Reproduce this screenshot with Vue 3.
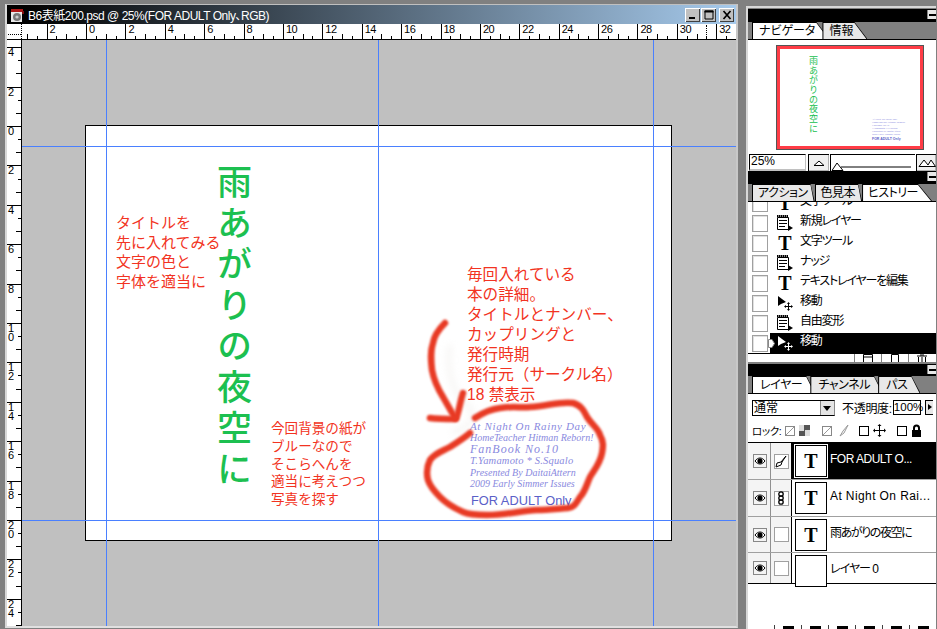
<script setup>
const ticksH = ['', '2', '0', '2', '4', '6', '8', '10', '12', '14', '16', '18', '20', '22', '24', '26', '28', '30', '32']
const ticksV = ['', '4', '2', '0', '2', '4', '6', '8', '10', '12', '14', '16', '18', '20', '22', '24']
const guidesV = [106, 378, 653].map(x => x - 22)
const guidesH = [146, 520].map(y => y - 40)
const redA = ['タイトルを', '先に入れてみる', '文字の色と', '字体を適当に']
const redB = ['今回背景の紙が', 'ブルーなので', 'そこらへんを', '適当に考えつつ', '写真を探す']
const redC = ['毎回入れている', '本の詳細。', 'タイトルとナンバー、', 'カップリングと', '発行時期', '発行元（サークル名）', '18 禁表示']
const blue = [
  { text: 'At Night On Rainy Day', sp: 0.65, size: 11 },
  { text: 'HomeTeacher Hitman Reborn!', sp: 0, size: 10 },
  { text: 'FanBook No.10', sp: 1, size: 12 },
  { text: 'T.Yamamoto * S.Squalo', sp: 0.2, size: 10.5 },
  { text: 'Presented By DaitaiAttern', sp: 0, size: 10 },
  { text: '2009 Early Simmer Issues', sp: 0, size: 10 }
]
const history = [
  { icon: 'doc', label: '新規レイヤー' },
  { icon: 'T', label: '文字ツール' },
  { icon: 'doc', label: 'ナッジ' },
  { icon: 'T', label: 'テキストレイヤーを編集' },
  { icon: 'move', label: '移動' },
  { icon: 'doc', label: '自由変形' },
  { icon: 'move', label: '移動', active: true }
]
const layers = [
  { name: 'FOR ADULT O...', t: true, mark: 'brush', active: true, h: 37, sp: -0.5 },
  { name: 'At Night On Rai...', t: true, mark: 'link', h: 37, sp: 0.4 },
  { name: '雨あがりの夜空に', t: true, mark: '', h: 36, sp: -1.4 },
  { name: 'レイヤー 0', t: false, mark: '', h: 30, sp: -1 }
]
</script>

<template>
  <div class="app">
    <section class="doc">
      <header class="doc-title">
        <svg class="app-icon" width="15" height="14" viewBox="0 0 15 14">
          <rect x="1" y="3" width="11" height="11" fill="#e8e8e8" />
          <rect x="1" y="1" width="12" height="3" fill="#b01818" />
          <rect x="12" y="3" width="2" height="3" fill="#801010" />
          <circle cx="7" cy="9" r="4" fill="#777" />
          <circle cx="7" cy="9" r="1.6" fill="#ccc" />
        </svg>
        <span class="doc-name">B6表紙200.psd @ 25%(FOR ADULT Only、RGB)</span>
        <div class="win-buttons">
          <button class="win-btn"><svg width="14" height="12" viewBox="0 0 14 12"><rect x="3" y="8" width="6" height="2" fill="#000" /></svg></button>
          <button class="win-btn"><svg width="14" height="12" viewBox="0 0 14 12"><path d="M3 2h8v8H3z" fill="none" stroke="#000" stroke-width="1" /><rect x="2.500" y="1.500" width="9" height="2" fill="#000" /></svg></button>
          <button class="win-btn win-close"><svg width="14" height="12" viewBox="0 0 14 12"><path d="M3.500 2l7 8M10.500 2l-7 8" stroke="#000" stroke-width="1.700" /></svg></button>
        </div>
      </header>

      <div class="ruler-top">
        <div class="corner"></div>
        <div class="h-ruler">
          <div v-for="(t, i) in ticksH" :key="i" class="h-cell">
            <span class="h-label">{{ t }}</span>
            <i class="tick major"></i><i class="tick"></i><i class="tick mid"></i><i class="tick"></i>
          </div>
          <span class="tracker"></span>
        </div>
      </div>

      <div class="doc-body">
        <div class="v-ruler">
          <div v-for="(t, i) in ticksV" :key="i" class="v-cell">
            <span class="v-label">{{ t }}</span>
            <i class="vtick"></i><i class="vtick mid"></i><i class="vtick"></i>
          </div>
        </div>

        <div class="canvas">
          <div class="page">
            <div class="main-title">雨あがりの夜空に</div>
            <div class="note note-a"><div v-for="l in redA" :key="l">{{ l }}</div></div>
            <div class="note note-b"><div v-for="l in redB" :key="l">{{ l }}</div></div>
            <div class="note note-c"><div v-for="l in redC" :key="l">{{ l }}</div></div>
            <div class="credits"><div v-for="l in blue" :key="l.text" :style="{ letterSpacing: l.sp + 'px', fontSize: l.size + 'px' }">{{ l.text }}</div></div>
            <div class="adult">FOR ADULT Only</div>
            <svg class="scribble" viewBox="86 126 585 414" width="585" height="414">
              <path class="smear" d="M450 345C446 370 452 395 470 408C476 418 470 428 452 432" />
              <path class="red" d="M475 418C484 412 492 409 500 408C512 406 522 408 530 407C548 406 560 401 573 403C581 405 584 411 587 417C592 425 598 428 600 435C604 442 603 447 602 453C600 464 594 470 590 477C586 486 585 492 580 497C576 503 575 507 568 508C555 509 546 510 537 510C520 511 504 515 487 515C478 515 470 515 463 512C454 508 446 503 440 497C434 491 430 486 428 480C426 472 427 466 430 460C435 453 443 451 450 447C458 442 464 438 470 433" />
              <path class="red" d="M445 323C438 330 434 336 433 343C430 352 431 361 432 370C434 381 438 389 443 397C447 404 451 411 455 418" />
              <path class="red" d="M430 418C438 419 447 419 456 419C459 411 460 402 463 393" />
            </svg>
          </div>
          <i v-for="x in guidesV" :key="'v' + x" class="guide-v" :style="{ left: x + 'px' }"></i>
          <i v-for="y in guidesH" :key="'h' + y" class="guide-h" :style="{ top: y + 'px' }"></i>
        </div>
      </div>
    </section>

    <aside class="panels">
      <section class="panel nav-panel">
        <div class="panel-head"><span class="min"></span></div>
        <div class="tabs">
          <div class="tab on"><span>ナビゲータ</span></div>
          <div class="tab"><span>情報</span></div>
        </div>
        <div class="nav-view">
          <div class="thumb">
            <div class="thumb-title">雨あがりの夜空に</div>
            <div class="thumb-credits">
              <div v-for="l in blue" :key="l.text">{{ l.text }}</div>
              <b>FOR ADULT Only</b>
            </div>
          </div>
        </div>
        <div class="nav-controls">
          <div class="zoom-field">25%</div>
          <button class="mount-btn">
            <svg width="12" height="6" viewBox="0 0 12 6"><path d="M1 5.500L6 1l5 4.500z" fill="#fff" stroke="#000" /></svg>
          </button>
          <div class="slider">
            <svg width="86" height="16" viewBox="0 0 86 16"><path d="M10 12H80" stroke="#000" /><path d="M1 15.500L6 8l6 7.500z" fill="#fff" stroke="#000" /></svg>
          </div>
          <button class="mount-btn big">
            <svg width="18" height="8" viewBox="0 0 18 8"><path d="M1 7.500L6 1l4 5 3-5 4.500 6.500z" fill="#fff" stroke="#000" /></svg>
          </button>
        </div>
      </section>

      <section class="panel hist-panel">
        <div class="panel-head"><span class="min"></span></div>
        <div class="tabs">
          <div class="tab"><span>アクション</span></div>
          <div class="tab"><span>色見本</span></div>
          <div class="tab on"><span>ヒストリー</span></div>
        </div>
        <div class="hist-list">
          <div class="hist-row first">
            <i class="box"></i><span class="hist-icon"><span class="t-icon">T</span></span><span class="hist-label">文字ツール</span>
          </div>
          <div v-for="(h, i) in history" :key="i" class="hist-row" :class="{ active: h.active }">
            <i class="box"></i>
            <svg v-if="h.active" class="marker" width="7" height="9" viewBox="0 0 7 9"><path d="M.5.5H4L6.500 4.500 4 8.500H.5z" fill="#fff" stroke="#888" /></svg>
            <span class="hist-icon">
              <span v-if="h.icon === 'T'" class="t-icon">T</span>
              <svg v-else-if="h.icon === 'doc'" width="16" height="16" viewBox="0 0 16 16">
                <path d="M.5 2.500h11v12H.5z" fill="#fff" stroke="#000" />
                <path d="M0 0h11v2H0zM2 5h8v1H2zM2 8h8v1H2zM2 11h6v1H2z" fill="#000" />
                <path d="M1 1h1M3 1h1M5 1h1M7 1h1M9 1h1" stroke="#fff" stroke-width="1" />
                <path d="M11 10l5 3-5 3z" fill="#000" />
              </svg>
              <svg v-else width="16" height="16" viewBox="0 0 16 16">
                <path d="M1 1v10l3-2 5-2z" :fill="h.active ? '#fff' : '#000'" />
                <path d="M11.500 8v7M8 11.500h7" :stroke="h.active ? '#fff' : '#000'" stroke-width="1" fill="none" />
                <path d="M11.500 7l-1.500 2h3zM11.500 16l-1.500-2h3zM7 11.500l2-1.500v3zM16 11.500l-2-1.500v3z" :fill="h.active ? '#fff' : '#000'" />
              </svg>
            </span>
            <span class="hist-label">{{ h.label }}</span>
          </div>
        </div>
        <div class="hist-tools">
          <i class="tool"><svg width="12" height="8" viewBox="0 0 12 8"><path d="M1.500 8V.5h9V8M1.500 3h9" fill="none" stroke="#000" /></svg></i>
          <i class="tool"><svg width="12" height="8" viewBox="0 0 12 8"><path d="M2.500 8V.5h7V8" fill="none" stroke="#000" /></svg></i>
          <i class="tool"><svg width="12" height="8" viewBox="0 0 12 8"><path d="M1 2h10M4 1h4M2.500 3v5M9.500 3v5M6 3v5" fill="none" stroke="#000" /></svg></i>
        </div>
      </section>

      <section class="panel layer-panel">
        <div class="panel-head short"><span class="min"></span></div>
        <div class="tabs">
          <div class="tab on"><span>レイヤー</span></div>
          <div class="tab"><span>チャンネル</span></div>
          <div class="tab"><span>パス</span></div>
        </div>
        <div class="layer-controls">
          <div class="select"><span>通常</span><i class="select-arrow"></i></div>
          <span class="opacity-label">不透明度:</span>
          <div class="opacity-field">100%</div>
          <i class="opacity-arrow"></i>
        </div>
        <div class="lock-row">
          <span class="lock-label">ロック:</span>
          <i class="check checked c1"></i>
          <i class="checker"></i>
          <i class="check checked c2"></i>
          <svg class="lock-ico i1" width="11" height="13" viewBox="0 0 11 13"><path d="M10 1L5 7l-3 5 4-3z" fill="none" stroke="#999" /></svg>
          <i class="check c3"></i>
          <svg class="lock-ico" width="13" height="13" viewBox="0 0 13 13"><path d="M6.500 2v9M2 6.500h9" stroke="#000" stroke-width="1" /><path d="M6.500 0l-2 2h4zM6.500 13l-2-2h4zM0 6.500l2-2v4zM13 6.500l-2-2v4z" fill="#000" /></svg>
          <i class="check c4"></i>
          <svg class="lock-ico" width="11" height="13" viewBox="0 0 11 13"><path d="M3 6V4a2.500 2.500 0 0 1 5 0v2" fill="none" stroke="#000" stroke-width="2" /><rect x="1" y="6" width="9" height="7" fill="#000" /></svg>
        </div>
        <div class="layers">
          <div v-for="l in layers" :key="l.name" class="layer" :class="{ active: l.active }" :style="{ height: l.h + 'px' }">
            <div class="cell eye">
              <svg width="14" height="14" viewBox="0 0 14 14">
                <rect x=".5" y=".5" width="13" height="13" fill="#f4f4f4" stroke="#888" />
                <path d="M2 7c3-4 7-4 10 0-3 4-7 4-10 0z" fill="#fff" stroke="#000" />
                <circle cx="7" cy="7" r="2.600" fill="#000" />
              </svg>
            </div>
            <div class="cell mark">
              <i class="mark-box">
                <svg v-if="l.mark === 'brush'" width="12" height="13" viewBox="0 0 12 13"><path d="M11 1L6 7 2 8l-1 4 5-2 1-3z" fill="none" stroke="#000" /></svg>
                <svg v-else-if="l.mark === 'link'" width="8" height="14" viewBox="0 0 8 14"><g fill="none" stroke="#000" stroke-width="1.300"><circle cx="4" cy="3" r="2.200" /><circle cx="4" cy="7" r="2.200" /><circle cx="4" cy="11" r="2.200" /></g></svg>
              </i>
            </div>
            <div class="layer-main">
              <div class="layer-thumb"><span v-if="l.t">T</span></div>
              <span class="layer-name" :style="{ letterSpacing: l.sp + 'px' }">{{ l.name }}</span>
            </div>
          </div>
        </div>
        <div class="layer-empty"></div>
        <div class="layer-tools">
          <i v-for="n in 6" :key="n" class="ltool"></i>
        </div>
      </section>
    </aside>
  </div>
</template>

<style>
html, body { margin: 0; padding: 0; background: #808080; }
</style>

<style scoped>
.app {
  display: flex;
  width: 937px;
  height: 629px;
  overflow: hidden;
  background: #808080;
  font-family: "Liberation Sans", "Noto Sans CJK JP", sans-serif;
  font-feature-settings: "palt";
  color: #000;
}
i { display: block; font-style: normal; }
button { padding: 0; margin: 0; }

/* Document window */
.doc {
  width: 733px;
  height: 624px;
  margin: 4px 0 0 5px;
  border-top: 1px solid #c0c0c0;
  border-left: 2px solid #d8d8d8;
  border-right: 2px solid #c8c8c8;
  border-bottom: 2px solid #e0e0e0;
  box-sizing: border-box;
  display: flex;
  flex-direction: column;
  flex: none;
}
.doc-title {
  height: 19px;
  flex: none;
  display: flex;
  align-items: center;
  background: linear-gradient(90deg, #000 0%, #000 2%, #a6caec 100%);
  color: #fff;
  padding-left: 3px;
}
.app-icon { flex: none; }
.doc-name { margin-left: 3px; font-size: 12px; white-space: nowrap; letter-spacing: -.47px; }
.win-buttons { margin-left: auto; margin-right: 2px; display: flex; gap: 1px; }
.win-btn {
  width: 15px;
  height: 14px;
  display: flex;
  align-items: center;
  justify-content: center;
  background: #c0c0c0;
  border: 0;
  box-shadow: inset 1px 1px 0 #fff, inset -1px -1px 0 #404040;
}
.win-close { margin-left: 2px; }

.ruler-top { display: flex; height: 16px; flex: none; background: #fff; border-bottom: 1px solid #000; box-sizing: border-box; }
.corner {
  width: 15px;
  flex: none;
  box-sizing: border-box;
  border-right: 1px dotted #000;
  background: linear-gradient(90deg, #000 50%, #fff 50%) 1px 10px / 2px 1px repeat-x;
}
.h-ruler { position: relative; flex: 1; display: flex; overflow: hidden; }
.h-cell {
  flex: 0 0 39.4px;
  display: flex;
  align-items: flex-end;
  position: relative;
}
.h-cell:first-child { margin-left: -14.8px; }
.h-label { position: absolute; left: 3px; top: 0; font-size: 11px; line-height: 11px; letter-spacing: -.5px; }
.tick { flex: 1; height: 3px; border-left: 1px solid #000; box-sizing: border-box; }
.tick.mid { height: 5px; }
.tick.major { height: 15px; }
.tracker {
  position: absolute;
  left: 684px;
  top: 1px;
  height: 14px;
  border-left: 1px dotted #000;
}

.doc-body { flex: 1; display: flex; min-height: 0; }
.v-ruler {
  width: 15px;
  flex: none;
  background: #fff;
  border-right: 1px solid #000;
  box-sizing: border-box;
  overflow: hidden;
}
.v-cell {
  height: 39.4px;
  position: relative;
  display: flex;
  flex-direction: column;
  align-items: flex-end;
  border-top: 1px solid #000;
  box-sizing: border-box;
}
.v-cell:first-child { margin-top: -32.2px; }
.v-label {
  position: absolute;
  left: 1px;
  top: 0;
  width: 7px;
  font-size: 11px;
  line-height: 9px;
  word-break: break-all;
}
.vtick { flex: 1; width: 3px; border-bottom: 1px solid #000; box-sizing: border-box; }
.vtick.mid { width: 5px; }
.vtick:nth-last-child(1) { border-bottom: 0; flex: 1; }

.canvas { position: relative; flex: 1; background: #c0c0c0; overflow: hidden; }
.page {
  position: relative;
  width: 585px;
  height: 414px;
  margin: 85px 0 0 63px;
  background: #fff;
  border: 1px solid #000;
}
.guide-v { position: absolute; top: 0; bottom: 0; width: 1px; background: #4a80ff; }
.guide-h { position: absolute; left: 0; right: 0; height: 1px; background: #4a80ff; }

.main-title {
  position: absolute;
  left: 128px;
  top: 38px;
  writing-mode: vertical-rl;
  font-family: "Noto Sans CJK JP", sans-serif;
  font-feature-settings: normal;
  font-weight: 500;
  font-size: 35px;
  line-height: 40px;
  letter-spacing: 6px;
  color: #1cc050;
  white-space: nowrap;
}
.note { position: absolute; color: #f23322; white-space: nowrap; font-feature-settings: normal; }
.note-a { left: 30px; top: 87px; font-size: 15px; line-height: 19.5px; }
.note-b { left: 185px; top: 294px; font-size: 13.6px; line-height: 17.8px; }
.note-c { left: 381px; top: 139px; font-size: 15.600px; line-height: 20px; }
.credits {
  position: absolute;
  left: 384px;
  top: 295px;
  width: 130px;
  font-family: "Liberation Serif", serif;
  font-style: italic;
  font-size: 10px;
  line-height: 11.400px;
  color: #8a8ae0;
  white-space: nowrap;
}
.adult { position: absolute; left: 385px; top: 367px; font-size: 12.800px; line-height: 16px; color: #5a60c8; white-space: nowrap; }
.scribble { position: absolute; left: 0; top: 0; overflow: visible; }
.red { fill: none; stroke: #e83a24; stroke-width: 6.500; stroke-linecap: round; stroke-linejoin: round; filter: blur(.8px); }
.smear { fill: none; stroke: #e8e4e0; stroke-width: 6; opacity: .3; filter: blur(3px); }

/* Panels */
.panels {
  margin-left: 8px;
  width: 190px;
  flex: none;
  display: flex;
  flex-direction: column;
  padding-top: 6px;
  box-sizing: border-box;
  height: 629px;
}
.panel {
  border-left: 2px solid #d8d8d8;
  box-sizing: border-box;
  flex: none;
}
.nav-panel { height: 165px; border-top: 2px solid #d8d8d8; }
.hist-panel { height: 193px; }
.layer-panel { height: 265px; }
.panel-head { height: 13px; background: #000; position: relative; }
.panel-head.short { height: 12px; }
.nav-panel .panel-head { margin-top: 1px; }
.min { position: absolute; right: 0; top: 1px; width: 8px; height: 9px; background: #e8e8e8; border-left: 1px solid #888; }
.min::after { content: ""; position: absolute; left: 1px; top: 4px; width: 7px; height: 2px; background: #000; }
.tabs {
  height: 17px;
  background: #808080;
  display: flex;
  padding-left: 4px;
  border-bottom: 1px solid #000;
  box-sizing: content-box;
}
.tab {
  background: #000;
  padding: 1px 0 0 1px;
  margin-right: -7px;
  clip-path: polygon(0 0, calc(100% - 13px) 0, 100% 100%, 0 100%);
  display: flex;
  align-items: stretch;
}
.tab span {
  background: #e8e8e8;
  padding: 1px 14px 0 6px;
  font-size: 12px;
  line-height: 15px;
  white-space: nowrap;
  clip-path: polygon(0 0, calc(100% - 13px) 0, calc(100% - 1px) 100%, 0 100%);
}
.tab.on span { background: #fff; }
.hist-panel .tab { margin-right: 0; clip-path: polygon(0 0, calc(100% - 4px) 0, 100% 100%, 0 100%); }
.hist-panel .tab span { padding: 1px 7px 0 5px; letter-spacing: -.5px; clip-path: polygon(0 0, calc(100% - 4px) 0, calc(100% - 1px) 100%, 0 100%); }
.hist-panel .tab.on { clip-path: polygon(0 0, calc(100% - 14px) 0, 100% 100%, 0 100%); }
.hist-panel .tab.on span { padding-right: 14px; clip-path: polygon(0 0, calc(100% - 14px) 0, calc(100% - 1px) 100%, 0 100%); }
.layer-panel .tab { margin-right: -5px; clip-path: polygon(0 0, calc(100% - 9px) 0, 100% 100%, 0 100%); }
.layer-panel .tab span { padding: 1px 13px 0 7px; letter-spacing: -.4px; clip-path: polygon(0 0, calc(100% - 9px) 0, calc(100% - 1px) 100%, 0 100%); }

.nav-view { height: 114px; background: #fff; display: flex; padding: 6px 0 0 29px; box-sizing: border-box; }
.thumb {
  position: relative;
  width: 146px;
  height: 103px;
  box-sizing: border-box;
  background: #fff;
  border: 3px solid #ff3c46;
  outline: 1px solid #555;
}
.thumb-title {
  position: absolute;
  left: 29px;
  top: 7px;
  writing-mode: vertical-rl;
  font-family: "Noto Sans CJK JP", sans-serif;
  font-size: 9px;
  line-height: 9px;
  letter-spacing: .7px;
  color: #20c050;
  white-space: nowrap;
}
.thumb-credits {
  position: absolute;
  left: 92px;
  top: 69px;
  font-family: "Liberation Serif", serif;
  font-style: italic;
  font-size: 2.700px;
  line-height: 3px;
  color: #8a8ae0;
  white-space: nowrap;
}
.thumb-credits b { display: block; margin-top: 1px; font: 700 3.500px/5px "Liberation Sans", sans-serif; color: #5a60c8; }

.nav-controls { height: 17px; display: flex; background: #fff; align-items: stretch; box-sizing: border-box; }
.zoom-field {
  width: 58px;
  margin-left: 1px;
  border: 1px solid #000;
  border-right-color: #c0c0c0;
  border-bottom: 2px solid #c0c0c0;
  box-sizing: border-box;
  font-size: 12px;
  line-height: 13px;
  padding-left: 1px;
}
.mount-btn {
  width: 21px;
  margin-left: 2px;
  border: 0;
  border-top: 1px solid #000;
  border-left: 1px solid #000;
  background: #f0f0f0;
  box-shadow: inset -1px -1px 0 #b0b0b0;
  display: flex;
  align-items: center;
  justify-content: center;
}
.mount-btn.big { width: 20px; margin-left: 1px; }
.slider { width: 86px; margin-left: 1px; border-top: 1px solid #000; border-left: 1px solid #000; box-sizing: border-box; background: #fff; overflow: hidden; }

.hist-list { height: 151px; background: #fff; overflow: hidden; }
.hist-row {
  height: 20px;
  display: flex;
  align-items: center;
  position: relative;
  font-size: 12px;
  line-height: 14px;
  white-space: nowrap;
}
.hist-row.first { margin-top: -9px; }
.box {
  width: 16px;
  height: 17px;
  margin-left: 4px;
  border: 1px solid #a0a0a0;
  box-sizing: border-box;
  background: #fff;
  flex: none;
  box-shadow: inset 1px 1px 0 #e0e0e0;
}
.hist-icon { width: 16px; margin-left: 9px; height: 16px; display: flex; align-items: center; justify-content: center; flex: none; }
.t-icon { font-family: "Liberation Serif", serif; font-weight: 700; font-size: 20px; line-height: 16px; }
.hist-label { margin-left: 7px; position: relative; top: -2px; letter-spacing: -1.200px; }
.hist-row.active .hist-label { color: #fff; }
.hist-row.active::after { content: ""; position: absolute; left: 22px; right: 0; top: 0; bottom: 0; background: #000; z-index: 0; }
.hist-row.active > * { position: relative; z-index: 1; }
.marker { position: absolute !important; left: 20px; top: 6px; }

.hist-tools { height: 9px; background: #fff; display: flex; justify-content: flex-end; border-top: 1px solid #000; box-sizing: border-box; padding-right: 1px; overflow: hidden; }
.tool { width: 26px; border-left: 1px solid #808080; display: flex; justify-content: center; align-items: flex-end; }

.layer-panel { background: #fff; display: flex; flex-direction: column; }
.layer-controls { height: 27px; background: #fff; display: flex; align-items: center; flex: none; font-size: 12px; }
.select {
  width: 83px;
  height: 16px;
  margin-left: 4px;
  background: #fff;
  border: 1px solid #000;
  border-right: 1px solid #888;
  box-sizing: border-box;
  display: flex;
  align-items: center;
  justify-content: space-between;
  padding-left: 1px;
  font-size: 12px;
  line-height: 14px;
}
.select-arrow { width: 13px; height: 14px; background: #e4e4e4; border-left: 1px solid #888; position: relative; }
.select-arrow::after { content: ""; position: absolute; left: 2px; top: 5px; border: 4px solid transparent; border-top: 5px solid #000; border-bottom: 0; }
.opacity-label { margin-left: 7px; white-space: nowrap; letter-spacing: -.3px; }
.opacity-field { width: 28px; margin-left: 1px; height: 15px; border: 1px solid #000; box-sizing: border-box; font-size: 11.500px; line-height: 13px; text-align: center; background: #fff; }
.opacity-arrow { margin-left: 4px; width: 8px; height: 15px; background: #e8e8e8; border: 1px solid #000; border-right: 0; box-sizing: border-box; position: relative; }
.opacity-arrow::after { content: ""; position: absolute; left: 2px; top: 3px; border: 3.500px solid transparent; border-left: 4px solid #000; border-right: 0; }

.lock-row { height: 22px; display: flex; align-items: center; flex: none; border-bottom: 1px solid #000; box-sizing: border-box; font-size: 10.500px; padding: 0 0 2px 4px; white-space: nowrap; }
.lock-label { width: 29px; flex: none; letter-spacing: -.4px; }
.check { width: 10px; height: 10px; border: 1px solid #000; box-sizing: border-box; flex: none; position: relative; }
.check.checked { border-color: #888; background: linear-gradient(135deg, #fff 45%, #999 45%, #999 55%, #fff 55%); }
.c1 { margin-left: 4px; }
.c2 { margin-left: 12px; }
.c3 { margin-left: 10px; }
.c4 { margin-left: 11px; }
.checker {
  width: 11px;
  height: 11px;
  margin-left: 4px;
  background: conic-gradient(#555 25%, #ddd 0 50%, #555 0 75%, #ddd 0);
  flex: none;
}
.lock-ico { margin-left: 4px; flex: none; }
.lock-ico.i1 { margin-left: 6px; }

.layers { flex: none; border-bottom: 1px solid #000; }
.layer { display: flex; border-bottom: 1px solid #a0a0a0; box-sizing: border-box; }
.layer:last-child { border-bottom: 0; }
.cell { flex: none; display: flex; align-items: center; justify-content: center; }
.eye { border-right: 1px solid #909090; background: #f4f4f4; padding-left: 2px; box-sizing: border-box; width: 23px; }
.mark { width: 21px; border-right: 1px solid #000; background: #f4f4f4; box-sizing: border-box; }
.mark-box { width: 15px; height: 15px; border: 1px solid #a0a0a0; box-sizing: border-box; display: flex; align-items: center; justify-content: center; background: #fff; }
.layer-main { flex: 1; min-width: 0; display: flex; align-items: flex-start; background: #fff; padding-left: 1px; }
.layer.active .layer-main { background: #000; color: #fff; }
.layer-thumb {
  width: 32px;
  height: 32px;
  margin: 2px 0 0 2px;
  border: 1px solid #000;
  box-sizing: border-box;
  background: #fff;
  color: #000;
  display: flex;
  align-items: center;
  justify-content: center;
  font-family: "Liberation Serif", serif;
  font-weight: 700;
  font-size: 20px;
  flex: none;
}
.layer.active .layer-thumb { outline: 1px solid #fff; }
.layer-name { margin: 9px 0 0 3px; font-size: 12px; line-height: 14px; white-space: nowrap; }
.layer-empty { flex: 1; }
.layer-tools { height: 4px; flex: none; display: flex; justify-content: flex-end; }
.ltool { width: 27px; border-left: 1px solid #404040; box-sizing: border-box; position: relative; }
.ltool::after { content: ""; position: absolute; left: 8px; top: 1px; width: 11px; height: 3px; background: #000; }
</style>
